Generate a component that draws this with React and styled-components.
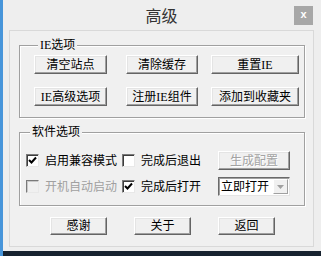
import styled, { createGlobalStyle } from 'styled-components';

const GlobalStyle = createGlobalStyle`
  html, body { margin: 0; padding: 0; }
  body {
    width: 321px;
    height: 256px;
    overflow: hidden;
    background: #17222f;
    font-family: "Liberation Serif", "Noto Sans CJK SC", serif;
    font-size: 12px;
  }
`;

const Desktop = styled.div`
  width: 321px;
  height: 256px;
  box-sizing: border-box;
  border-left: 3px solid #4795da;
  background: #17222f;
  display: flex;
  align-items: flex-start;
`;

const Window = styled.div`
  width: 318px;
  height: 251px;
  box-sizing: border-box;
  background: #eeeeee;
  padding: 0 7px 4px 6px;
  display: flex;
  flex-direction: column;
`;

const TitleBar = styled.div`
  height: 30px;
  display: grid;
  grid-template-columns: 1fr auto 1fr;
  align-items: center;
`;

const Title = styled.div`
  grid-column: 2;
  font-family: "Noto Sans CJK SC", sans-serif;
  font-size: 16px;
  line-height: 16px;
  color: #333;
`;

const CloseButton = styled.div`
  grid-column: 3;
  justify-self: end;
  margin-right: 1px;
  width: 19px;
  height: 19px;
  background: #a7a7a7;
  color: #fff;
  font-family: "Liberation Sans", sans-serif;
  font-weight: bold;
  font-size: 11px;
  line-height: 17px;
  text-align: center;
`;

const Panel = styled.div`
  flex: 1;
  border: 1px solid #d9d9d9;
  background: #f0f0f0;
  padding: 8px 8px 0 9px;
  display: flex;
  flex-direction: column;
`;

const Group = styled.fieldset`
  margin: ${({ mt }) => mt || 0}px 0 0 0;
  padding: ${({ pad }) => pad};
  border: 1px solid #a0a0a0;
  box-shadow: 1px 1px 0 #fff, inset 1px 1px 0 #fff;
  min-width: 0;
`;

const Legend = styled.legend`
  margin-left: 4px;
  padding: 0 2px;
  background: #f0f0f0;
  line-height: 12px;
  font-size: 12px;
  color: #000;
`;

const ButtonGrid = styled.div`
  display: grid;
  grid-template-columns: 92px 85px 88px;
  row-gap: 13px;
`;

const Button = styled.div`
  box-sizing: border-box;
  width: ${({ w }) => w}px;
  height: ${({ h }) => h || 19}px;
  background: #f0f0f0;
  border: 1px solid;
  border-color: #ffffff #646464 #646464 #ffffff;
  box-shadow: inset -1px -1px 0 #a0a0a0, inset 1px 1px 0 #e4e4e4;
  display: flex;
  align-items: center;
  justify-content: center;
  font-size: 12px;
  line-height: 12px;
  color: ${({ disabled }) => (disabled ? '#a3a3a3' : '#000')};
  text-shadow: ${({ disabled }) => (disabled ? '1px 1px 0 #fff' : 'none')};
  white-space: nowrap;
`;

const OptionGrid = styled.div`
  display: grid;
  grid-template-columns: 96px 96px 72px;
  grid-auto-rows: 19px;
  row-gap: 7px;
  align-items: center;
`;

const Check = styled.label`
  display: flex;
  align-items: center;
  gap: 6px;
  font-size: 12px;
  line-height: 12px;
  white-space: nowrap;
  color: ${({ disabled }) => (disabled ? '#a0a0a0' : '#000')};
`;

const Box = styled.span`
  box-sizing: border-box;
  width: 13px;
  height: 13px;
  flex: none;
  border: 1px solid;
  border-color: #7a7a7a #e8e8e8 #e8e8e8 #7a7a7a;
  box-shadow: inset 1px 1px 0 ${({ disabled }) => (disabled ? '#c8c8c8' : '#3c3c3c')};
  background: ${({ disabled }) => (disabled ? '#f0f0f0' : '#fff')};
  display: flex;
  align-items: center;
  justify-content: center;
`;

const SelectBox = styled.div`
  box-sizing: border-box;
  width: 72px;
  height: 19px;
  background: #fff;
  border: 1px solid;
  border-color: #6a6a6a #e4e4e4 #e4e4e4 #6a6a6a;
  box-shadow: inset 1px 1px 0 #a0a0a0;
  display: flex;
  align-items: center;
  padding: 0 1px 0 2px;
  font-size: 12px;
  line-height: 12px;
`;

const SelectText = styled.span`
  flex: 1;
  white-space: nowrap;
`;

const DropButton = styled.span`
  box-sizing: border-box;
  width: 15px;
  height: 15px;
  background: #f0f0f0;
  border: 1px solid;
  border-color: #fff #a0a0a0 #a0a0a0 #fff;
  display: flex;
  align-items: center;
  justify-content: center;
`;

const BottomRow = styled.div`
  display: flex;
  gap: 27px;
  margin-top: 11px;
  padding-left: 31px;
`;

const CheckMark = () => (
  <svg width="9" height="9" viewBox="0 0 9 9">
    <path d="M1 4 L3.5 6.5 L8 1.5" fill="none" stroke="#000" strokeWidth="2" />
  </svg>
);

function CheckItem({ label, checked, disabled }) {
  return (
    <Check disabled={disabled}>
      <Box disabled={disabled}>{checked && <CheckMark />}</Box>
      {label}
    </Check>
  );
}

export default function App() {
  return (
    <>
      <GlobalStyle />
      <Desktop>
        <Window>
          <TitleBar>
            <Title>高级</Title>
            <CloseButton>x</CloseButton>
          </TitleBar>
          <Panel>
            <Group pad="4px 10px 11px 14px">
              <Legend>IE选项</Legend>
              <ButtonGrid>
                <Button w={73}>清空站点</Button>
                <Button w={72}>清除缓存</Button>
                <Button w={88}>重置IE</Button>
                <Button w={73}>IE高级选项</Button>
                <Button w={72}>注册IE组件</Button>
                <Button w={88}>添加到收藏夹</Button>
              </ButtonGrid>
            </Group>
            <Group mt={8} pad="13px 10px 9px 6px">
              <Legend>软件选项</Legend>
              <OptionGrid>
                <CheckItem label="启用兼容模式" checked />
                <CheckItem label="完成后退出" />
                <Button w={72} disabled>生成配置</Button>
                <CheckItem label="开机自动启动" disabled />
                <CheckItem label="完成后打开" checked />
                <SelectBox>
                  <SelectText>立即打开</SelectText>
                  <DropButton>
                    <svg width="7" height="4" viewBox="0 0 7 4">
                      <path d="M0 0 L7 0 L3.5 4 Z" fill="#a0a0a0" />
                    </svg>
                  </DropButton>
                </SelectBox>
              </OptionGrid>
            </Group>
            <BottomRow>
              <Button w={57} h={18}>感谢</Button>
              <Button w={57} h={18}>关于</Button>
              <Button w={57} h={18}>返回</Button>
            </BottomRow>
          </Panel>
        </Window>
      </Desktop>
    </>
  );
}
